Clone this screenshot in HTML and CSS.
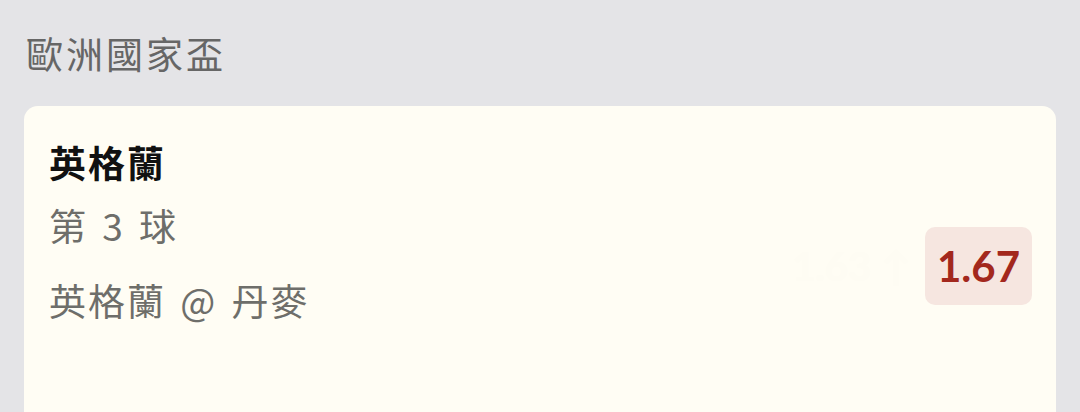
FILE: index.html
```html
<!DOCTYPE html>
<html lang="zh-Hant">
  <head>
    <meta name="viewport" content="width=device-width, initial-scale=1.0" />
    <link rel="stylesheet" href="styles.css">
  </head>
  <body>
    <h2 class="section-title">歐洲國家盃</h2>

    <div class="bet-card">
      <div class="bet-info">
        <div class="bet-pick">英格蘭</div>
        <div class="bet-market">第 3 球</div>
        <div class="bet-match">英格蘭 @ 丹麥</div>
      </div>

      <div class="odds-wrap">
        <span class="odds-old">1.63 ↑</span>
        <span class="odds">1.67</span>
      </div>
    </div>
  </body>
</html>
```

FILE: styles.css
```css
body {
  margin: 0;
  background-color: #e4e4e7;
  font-family: "Noto Sans CJK TC", "Noto Sans", sans-serif;
  color: #6e6e6a;
}
.section-title {
  margin: 31px 26px 31px;
  font-size: 37px;
  font-weight: 400;
  line-height: 44px;
  letter-spacing: 3px;
  color: #666666;
}
.bet-card {
  margin: 0 24px;
  min-height: 340px;
  padding: 34px 24px 0 25px;
  background: #fffdf4;
  border-radius: 14px;
  display: grid;
  grid-template-columns: 1fr auto;
  align-items: start;
  box-sizing: border-box;
}
.bet-info {
  display: flex;
  flex-direction: column;
  font-size: 37px;
  line-height: 44px;
  letter-spacing: 2px;
  word-spacing: 4px;
}
.bet-pick {
  font-weight: 700;
  color: #111111;
}
.bet-market {
  margin-top: 19px;
}
.bet-match {
  margin-top: 31px;
}
.odds-wrap {
  margin-top: 87px;
  display: flex;
  align-items: center;
  gap: 14px;
}
.odds-old {
  font-family: "Lato", sans-serif;
  font-size: 40px;
  font-weight: 700;
  color: #fefcf3;
}
.odds {
  display: flex;
  align-items: center;
  justify-content: center;
  width: 107px;
  height: 78px;
  border-radius: 10px;
  background: #f6e6e0;
  color: #a3281d;
  font-family: "Lato", sans-serif;
  font-size: 42px;
  font-weight: 700;
}
```
